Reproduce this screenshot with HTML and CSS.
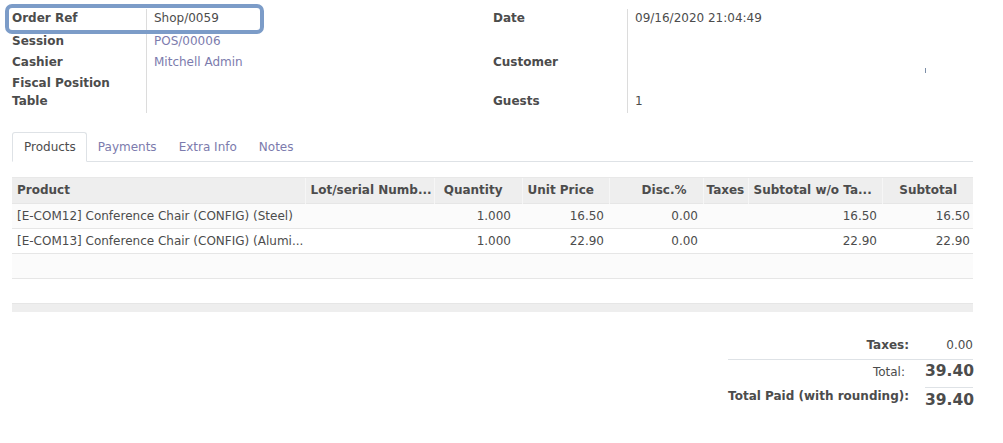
FILE: index.html
```html
<!DOCTYPE html>
<html>
<head>
<meta charset="utf-8">
<link rel="stylesheet" href="styles.css">
</head>
<body>
<div class="sheet">
  <div class="highlight"></div>
  <div class="groups">
    <div class="group group-left">
      <div class="lbl">Order Ref</div><div class="val">Shop/0059</div>
      <div class="lbl">Session</div><div class="val link">POS/00006</div>
      <div class="lbl">Cashier</div><div class="val link">Mitchell Admin</div>
      <div class="lbl">Fiscal Position</div><div class="val"></div>
      <div class="lbl">Table</div><div class="val"></div>
    </div>
    <div class="group group-right">
      <div class="lbl">Date</div><div class="val">09/16/2020 21:04:49</div>
      <div class="lbl">Customer</div><div class="val val-customer"><span class="tick"></span></div>
      <div class="lbl">Guests</div><div class="val">1</div>
    </div>
  </div>

  <ul class="tabs">
    <li class="tab active">Products</li>
    <li class="tab">Payments</li>
    <li class="tab">Extra Info</li>
    <li class="tab">Notes</li>
  </ul>

  <table class="lines">
    <colgroup>
      <col class="c-prod"><col class="c-lot"><col class="c-qty"><col class="c-price"><col class="c-disc"><col class="c-tax"><col class="c-sub1"><col class="c-sub2">
    </colgroup>
    <thead>
      <tr>
        <th class="left">Product</th>
        <th class="left">Lot/serial Numb...</th>
        <th class="num qty-h">Quantity</th>
        <th class="num">Unit Price</th>
        <th class="num">Disc.%</th>
        <th class="left tight">Taxes</th>
        <th class="left">Subtotal w/o Ta...</th>
        <th class="num">Subtotal</th>
      </tr>
    </thead>
    <tbody>
      <tr class="odd">
        <td>[E-COM12] Conference Chair (CONFIG) (Steel)</td>
        <td></td>
        <td class="num qty">1.000</td>
        <td class="num">16.50</td>
        <td class="num">0.00</td>
        <td></td>
        <td class="num">16.50</td>
        <td class="num last">16.50</td>
      </tr>
      <tr>
        <td>[E-COM13] Conference Chair (CONFIG) (Alumi...</td>
        <td></td>
        <td class="num qty">1.000</td>
        <td class="num">22.90</td>
        <td class="num">0.00</td>
        <td></td>
        <td class="num">22.90</td>
        <td class="num last">22.90</td>
      </tr>
      <tr class="odd empty"><td colspan="8">&nbsp;</td></tr>
      <tr class="empty"><td colspan="8">&nbsp;</td></tr>
    </tbody>
    <tfoot>
      <tr><td colspan="8"></td></tr>
    </tfoot>
  </table>

  <div class="totals">
    <div class="t-lbl bold t-first">Taxes:</div><div class="t-val t-first">0.00</div>
    <div class="t-lbl t-total">Total:</div><div class="t-val big t-total">39.40</div>
    <div class="t-lbl bold t-paid">Total Paid (with rounding):</div><div class="t-val big t-paid t-paid-val">39.40</div>
  </div>
</div>
</body>
</html>
```

FILE: styles.css
```css
* { box-sizing: border-box; }
html, body { margin: 0; padding: 0; background: #fff; }
body {
  font-family: "DejaVu Sans", Verdana, sans-serif;
  font-size: 12px;
  line-height: 18px;
  color: #4c4c4c;
}
.sheet {
  position: relative;
  padding: 9px 30px 0 12px;
}
.highlight {
  position: absolute;
  left: 5px;
  top: 4px;
  width: 259px;
  height: 30px;
  border: 4px solid #7c9cc8;
  border-radius: 7px;
}
.groups {
  display: grid;
  grid-template-columns: 481px 1fr;
}
.group {
  display: grid;
  grid-template-columns: 134px 1fr;
}
.group-left { grid-template-rows: 23px 21px 21px 18px 21px; }
.group-right { grid-template-rows: 44px 39px 21px; }
.lbl { font-weight: bold; }
.val {
  border-left: 1px solid #dcdcdc;
  padding-left: 7px;
}
.group-left .val:first-of-type { margin-top: -1px; padding-top: 1px; }
.link { color: #7c7bad; }
.val-customer {
  display: flex;
  justify-content: flex-end;
  align-items: flex-start;
  padding-right: 47px;
}
.tick {
  display: block;
  width: 1px;
  height: 5px;
  margin-top: 15px;
  background: #7c8ea8;
}

.tabs {
  list-style: none;
  margin: 19px 0 0 0;
  padding: 0;
  display: flex;
  border-bottom: 1px solid #dee2e6;
}
.tab {
  padding: 5px 10px 5px 10px;
  border: 1px solid transparent;
  border-radius: 3px 3px 0 0;
  margin-bottom: -1px;
  color: #7c7bad;
}
.tab:first-child { padding-left: 11px; }
.tab.active {
  color: #4c4c4c;
  border-color: #dee2e6 #dee2e6 #fff #dee2e6;
  background: #fff;
}

.lines {
  margin-top: 15px;
  width: 961px;
  border-collapse: collapse;
  table-layout: fixed;
}
.c-prod { width: 293px; }
.c-lot { width: 129px; }
.c-qty { width: 88px; }
.c-price { width: 87px; }
.c-disc { width: 94px; }
.c-tax { width: 45px; }
.c-sub1 { width: 134px; }
.c-sub2 { width: 91px; }
.lines th {
  background: #eeeeee;
  font-weight: bold;
  padding: 3px 5px 4px 5px;
  height: 26px;
  white-space: nowrap;
  overflow: hidden;
  border-left: 1px solid #f6f6f6;
  border-top: 1px solid #e8e8e8;
}
.lines th:first-child { border-left: none; }
.lines th.left { text-align: left; }
.lines th.tight { padding-left: 3px; padding-right: 0; }
.lines th.num { text-align: right; padding-right: 16px; }
.lines th.qty-h { padding-right: 19px; }
.lines td {
  padding: 3px 5px;
  height: 25px;
  border-top: 1px solid #e6e6e6;
  white-space: nowrap;
  overflow: hidden;
}
.lines td.num { text-align: right; }
.lines td.qty { padding-right: 11px; }
.lines td.last { padding-right: 3px; }
.lines tr.odd td { background: #fbfbfb; }
.lines tfoot td {
  height: 8px;
  padding: 0;
  background: #eeeeee;
  border-top: 1px solid #e6e6e6;
}

.totals {
  margin: 24px 0 0 auto;
  width: max-content;
  display: grid;
  grid-template-columns: max-content 48px;
}
.t-lbl { text-align: right; padding-right: 16px; white-space: nowrap; }
.t-val { text-align: right; white-space: nowrap; }
.bold { font-weight: bold; }
.big { font-weight: bold; font-size: 15.5px; }
.t-first { padding-bottom: 5px; border-bottom: 1px solid #dee2e6; }
.t-total { padding-top: 1px; height: 27px; line-height: 20px; }
.t-total.t-lbl { padding-right: 20px; line-height: 18px; padding-top: 3px; }
.t-paid { line-height: 18px; }
.t-paid-val { border-top: 1px solid #dee2e6; padding-top: 2px; line-height: 20px; }
```
